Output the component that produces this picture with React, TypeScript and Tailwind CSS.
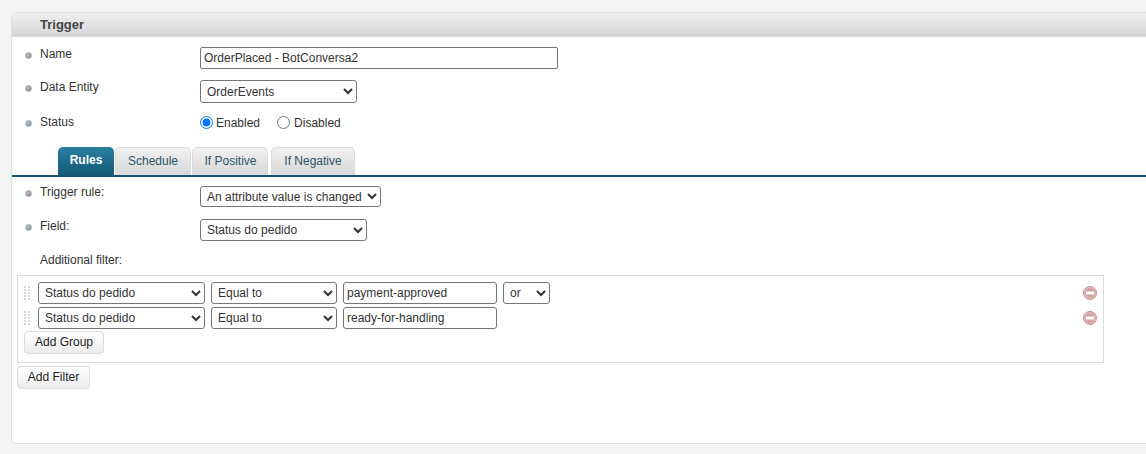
const font = { fontFamily: '"Liberation Sans", Arial, sans-serif' };

function Bullet() {
  return (
    <span className="mt-[5px] mr-[8px] ml-[13px] size-[7px] shrink-0 rounded-full border border-[#a9b0b8] bg-[radial-gradient(circle_at_35%_35%,#b9c0c8,#76808c)]" />
  );
}

function Row({
  label,
  bullet = true,
  className,
  children,
}: {
  label: string;
  bullet?: boolean;
  className: string;
  children?: React.ReactNode;
}) {
  return (
    <div className={`flex items-start ${className}`}>
      {bullet ? <Bullet /> : <span className="w-[28px] shrink-0" />}
      <label className="w-[160px] shrink-0 text-xs leading-[14px] text-[#333]">{label}</label>
      {children}
    </div>
  );
}

function Select({ value, className }: { value: string; className: string }) {
  return (
    <select
      defaultValue={value}
      className={`appearance-auto rounded-[3px] border border-[#767676] bg-white pl-[2px] text-xs text-[#333] ${className}`}
    >
      <option>{value}</option>
    </select>
  );
}

function Tab({ label, active, className }: { label: string; active?: boolean; className: string }) {
  return (
    <div
      className={`flex h-[28px] items-center justify-center rounded-t-[5px] pb-[2px] text-xs ${
        active
          ? "bg-gradient-to-b from-[#2b7fa0] to-[#145a78] font-bold text-white"
          : "border border-b-0 border-[#dcdcdc] bg-gradient-to-b from-[#f1f1f1] to-[#d8d8d8] text-[#2f5566]"
      } ${className}`}
    >
      {label}
    </div>
  );
}

function DragHandle() {
  return (
    <svg width="6" height="14" viewBox="0 0 6 14" className="mr-[1px] shrink-0 fill-[#d5d5d5]">
      {[0, 3, 6, 9, 12].map((y) => (
        <g key={y}>
          <rect x="0" y={y} width="2" height="2" />
          <rect x="4" y={y} width="2" height="2" />
        </g>
      ))}
    </svg>
  );
}

function RemoveIcon() {
  return (
    <svg width="14" height="14" viewBox="0 0 14 14" className="shrink-0">
      <circle cx="7" cy="7" r="6.5" fill="#e3b9b9" stroke="#cc9090" />
      <circle cx="7" cy="7" r="4.8" fill="#d6a0a0" />
      <rect x="3" y="5.5" width="8" height="3" fill="#fff" />
    </svg>
  );
}

function FilterRow({ value, joiner }: { value: string; joiner?: boolean }) {
  return (
    <div className="flex h-[22px] items-center">
      <DragHandle />
      <Select value="Status do pedido" className="ml-[7px] h-[22px] w-[167px]" />
      <Select value="Equal to" className="ml-[6px] h-[22px] w-[126px]" />
      <input
        readOnly
        value={value}
        className="ml-[6px] h-[22px] w-[154px] rounded-[3px] border border-[#767676] bg-white px-[3px] text-xs text-[#333]"
      />
      {joiner && <Select value="or" className="ml-[6px] h-[22px] w-[47px]" />}
      <span className="flex-1" />
      <span className="mr-[6px] mb-[1px]">
        <RemoveIcon />
      </span>
    </div>
  );
}

function Button({ label, className }: { label: string; className: string }) {
  return (
    <button className={`h-[23px] rounded-[4px] border border-[#dcdcdc] bg-gradient-to-b from-white to-[#ececec] pb-[1px] text-xs text-[#222] ${className}`}>
      {label}
    </button>
  );
}

export default function App() {
  return (
    <div className="h-[454px] w-[1146px] overflow-hidden bg-[#f4f4f4] pt-3 pl-[11px]" style={font}>
      <div className="h-[432px] w-[1150px] rounded-[5px] border border-[#dedede] bg-white">
        <div className="flex h-[24px] items-center rounded-t-[5px] bg-gradient-to-b from-[#f0f0f0] to-[#d4d4d4] pl-[28px] text-[13px] font-bold text-[#444]">
          Trigger
        </div>

        <div className="pt-[10px]">
          <Row label="Name" className="h-[33px]">
            <input
              readOnly
              value="OrderPlaced - BotConversa2"
              className="h-[22px] w-[358px] rounded-[2px] border border-[#767676] bg-white px-[3px] text-xs text-[#333]"
            />
          </Row>
          <Row label="Data Entity" className="h-[35px]">
            <Select value="OrderEvents" className="h-[23px] w-[157px]" />
          </Row>
          <Row label="Status" className="h-[32px]">
            <div className="flex items-start text-xs text-[#333]">
              <input type="radio" name="status" defaultChecked className="m-0 mt-[1px] size-[13px] accent-[#0075ff]" />
              <span className="ml-[3px]">Enabled</span>
              <input type="radio" name="status" className="m-0 mt-[1px] ml-[17px] size-[13px]" />
              <span className="ml-[4px]">Disabled</span>
            </div>
          </Row>
        </div>

        <div className="flex gap-[1px] border-b-2 border-[#14566f] pl-[46px]">
          <Tab label="Rules" active className="w-[56px]" />
          <Tab label="Schedule" className="w-[76px]" />
          <Tab label="If Positive" className="w-[76px] pl-[1px]" />
          <Tab label="If Negative" className="ml-[2px] w-[84px]" />
        </div>

        <div className="pt-[8px]">
          <Row label="Trigger rule:" className="h-[34px]">
            <Select value="An attribute value is changed" className="mt-[1px] h-[21px] w-[181px]" />
          </Row>
          <Row label="Field:" className="h-[34px]">
            <Select value="Status do pedido" className="h-[22px] w-[167px]" />
          </Row>
          <Row label="Additional filter:" bullet={false} className="h-[22px]" />
        </div>

        <div className="ml-[5px] w-[1087px] border border-[#dcdcdc] pt-[6px] pl-[6px]">
          <div className="flex h-[80px] flex-col gap-[3px]">
            <FilterRow value="payment-approved" joiner />
            <FilterRow value="ready-for-handling" />
            <Button label="Add Group" className="-mt-[1px] w-[80px] shrink-0" />
          </div>
        </div>
        <Button label="Add Filter" className="mt-[3px] ml-[5px] w-[73px]" />
      </div>
    </div>
  );
}
